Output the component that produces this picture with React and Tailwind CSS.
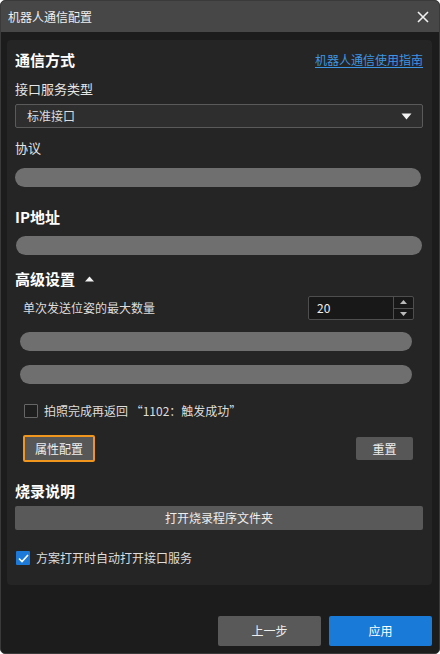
import React from 'react';

const font = { fontFamily: '"Noto Sans CJK SC", "Noto Sans", sans-serif' };

function Pill({ className = '' }) {
  return <div className={`h-[19px] rounded-full bg-[#6f6f6f] ${className}`} />;
}

export default function App() {
  return (
    <div className="w-[440px] h-[654px] bg-white" style={font}>
      <div className="w-full h-full flex flex-col rounded-[5px] overflow-hidden border border-[#3a3a3a] bg-[#1c1c1c] text-[#e6e6e6]">
        {/* Title bar */}
        <div className="h-[31px] shrink-0 bg-[#474747] flex items-center justify-between pl-[7px] pr-[8px]">
          <span className="text-[12px] text-[#eeeeee]">机器人通信配置</span>
          <svg width="12" height="12" viewBox="0 0 12 12" className="mr-[2px]">
            <path d="M1 1L11 11M11 1L1 11" stroke="#f0f0f0" strokeWidth="1.6" />
          </svg>
        </div>

        {/* Body */}
        <div className="flex-1 flex flex-col px-[6px] pt-[8px]">
          <div className="rounded-[4px] bg-[#252525] pl-[8px] pr-[9px] pt-[8px] pb-[18px] mr-[1px]">
            <div className="flex items-center justify-between h-[24px]">
              <span className="text-[15px] font-bold text-white">通信方式</span>
              <span className="text-[12px] text-[#3d95e4] underline underline-offset-2">机器人通信使用指南</span>
            </div>

            <div className="mt-[7px] text-[13px] h-[20px] leading-[20px]">接口服务类型</div>
            <div className="mt-[5px] h-[24px] flex items-center justify-between border border-[#5a5a5a] bg-[#2e2e2e] rounded-[2px] pl-[11px] pr-[10px]">
              <span className="text-[12px] text-[#dddddd]">标准接口</span>
              <svg width="11" height="7" viewBox="0 0 11 7">
                <path d="M0.5 0.5H10.5L5.5 6.5Z" fill="#f2f2f2" />
              </svg>
            </div>

            <div className="mt-[10px] text-[13px] h-[20px] leading-[20px]">协议</div>
            <Pill className="mt-[10px] mr-[2px]" />

            <div className="mt-[18px] text-[15px] font-bold text-white h-[24px] leading-[24px]">IP地址</div>
            <Pill className="mt-[7px] ml-[1px] mr-[1px]" />

            <div className="mt-[12px] flex items-center gap-[10px] h-[24px]">
              <span className="text-[15px] font-bold text-white">高级设置</span>
              <svg width="9" height="6" viewBox="0 0 9 6">
                <path d="M0 5.5H9L4.5 0.5Z" fill="#f2f2f2" />
              </svg>
            </div>

            <div className="mt-[5px] ml-[8px] mr-[9px] flex items-center justify-between">
              <span className="text-[12px] text-[#dddddd]">单次发送位姿的最大数量</span>
              <div className="flex h-[24px] w-[106px] border border-[#4e4e4e] bg-[#181818] rounded-[2px]">
                <div className="flex-1 flex items-center pl-[8px] text-[12px] text-[#eeeeee]">20</div>
                <div className="w-[20px] flex flex-col border-l border-[#4e4e4e]">
                  <div className="flex-1 flex items-center justify-center border-b border-[#4e4e4e]">
                    <svg width="7" height="4" viewBox="0 0 7 4"><path d="M0 4H7L3.5 0Z" fill="#bbbbbb" /></svg>
                  </div>
                  <div className="flex-1 flex items-center justify-center">
                    <svg width="7" height="4" viewBox="0 0 7 4"><path d="M0 0H7L3.5 4Z" fill="#bbbbbb" /></svg>
                  </div>
                </div>
              </div>
            </div>

            <Pill className="mt-[12px] ml-[5px] mr-[11px]" />
            <Pill className="mt-[14px] ml-[5px] mr-[11px]" />

            <div className="mt-[18px] ml-[9px] flex items-center gap-[6px]">
              <div className="w-[14px] h-[14px] border border-[#666666] bg-[#1e1e1e] rounded-[1px]" />
              <span className="text-[12px] text-[#dddddd]">拍照完成再返回 “1102：触发成功”</span>
            </div>

            <div className="mt-[15px] ml-[8px] mr-[10px] flex items-center justify-between">
              <button className="w-[72px] h-[27px] border-2 border-[#f0961e] bg-[#575757] rounded-[2px] text-[12px] text-[#eeeeee]">属性配置</button>
              <button className="w-[57px] h-[23px] bg-[#575757] rounded-[2px] text-[12px] text-[#eeeeee]">重置</button>
            </div>

            <div className="mt-[17px] text-[15px] font-bold text-white h-[24px] leading-[24px]">烧录说明</div>
            <button className="mt-[3px] w-full h-[24px] bg-[#595959] rounded-[2px] text-[12px] text-[#eeeeee]">打开烧录程序文件夹</button>

            <div className="mt-[19px] ml-[1px] flex items-center gap-[6px]">
              <div className="w-[14px] h-[14px] bg-[#1e7ad8] rounded-[1px] flex items-center justify-center">
                <svg width="11" height="9" viewBox="0 0 11 9"><path d="M1 4.5L4 7.5L10 1" stroke="#ffffff" strokeWidth="1.6" fill="none" /></svg>
              </div>
              <span className="text-[12px] text-[#dddddd]">方案打开时自动打开接口服务</span>
            </div>
          </div>

          <div className="flex-1" />

          <div className="flex justify-end gap-[8px] pb-[7px] pr-[1px]">
            <button className="w-[103px] h-[30px] bg-[#595959] rounded-[2px] text-[12px] text-[#eeeeee]">上一步</button>
            <button className="w-[103px] h-[30px] bg-[#1a7ad8] rounded-[2px] text-[12px] text-white">应用</button>
          </div>
        </div>
      </div>
    </div>
  );
}
